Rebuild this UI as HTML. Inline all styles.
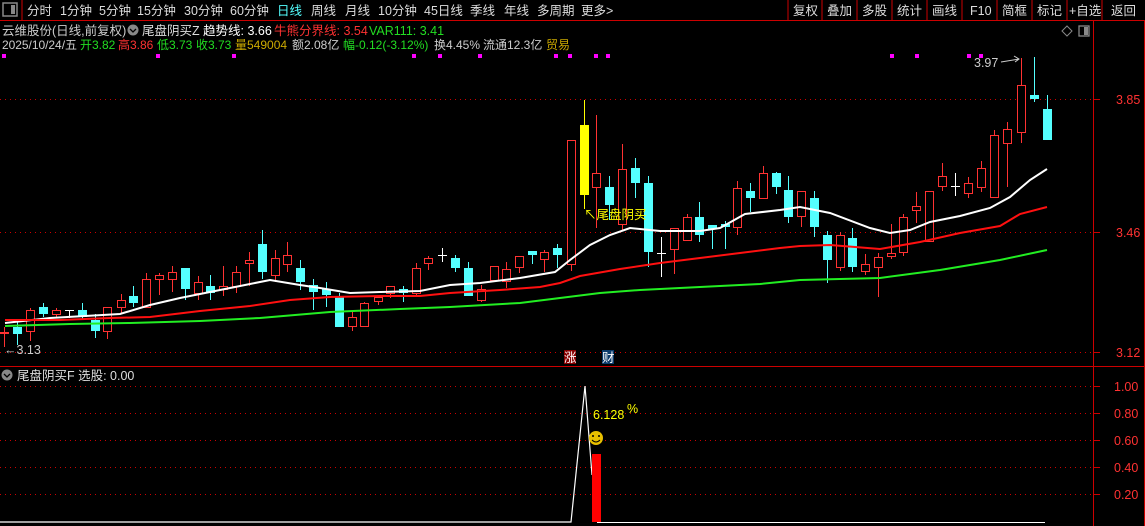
<!DOCTYPE html>
<html><head><meta charset="utf-8"><style>
body{margin:0;width:1145px;height:526px;background:#000;overflow:hidden;font-family:"Liberation Sans","Noto Sans CJK SC",sans-serif;}
svg{position:absolute;left:0;top:0}
text{font-family:"Liberation Sans","Noto Sans CJK SC",sans-serif;font-size:12.5px}
#cand{shape-rendering:crispEdges}
</style></head><body>
<svg id="s" width="1145" height="526" xmlns="http://www.w3.org/2000/svg">
<rect x="3" y="3" width="14" height="13" fill="none" stroke="#888" stroke-width="1.5"/><rect x="11" y="5" width="4" height="9" fill="#888"/>
<line x1="22" y1="0" x2="22" y2="20" stroke="#c00"/>
<g fill="#ddd">
<text x="27" y="15">分时</text><text x="60" y="15">1分钟</text><text x="99" y="15">5分钟</text><text x="137" y="15">15分钟</text><text x="184" y="15">30分钟</text><text x="230" y="15">60分钟</text><text x="277" y="15" fill="#54ffff">日线</text><text x="311" y="15">周线</text><text x="345" y="15">月线</text><text x="378" y="15">10分钟</text><text x="424" y="15">45日线</text><text x="470" y="15">季线</text><text x="504" y="15">年线</text><text x="537" y="15">多周期</text><text x="581" y="15">更多&gt;</text>
<text x="793" y="15">复权</text><text x="827" y="15">叠加</text><text x="862" y="15">多股</text><text x="897" y="15">统计</text><text x="932" y="15">画线</text><text x="970" y="15">F10</text><text x="1002" y="15">简框</text><text x="1037" y="15">标记</text><text x="1069" y="15">+自选</text><text x="1111" y="15">返回</text>
</g>
<g stroke="#c00"><line x1="788" y1="0" x2="788" y2="20"/><line x1="822" y1="0" x2="822" y2="20"/><line x1="857" y1="0" x2="857" y2="20"/><line x1="892" y1="0" x2="892" y2="20"/><line x1="927" y1="0" x2="927" y2="20"/><line x1="962" y1="0" x2="962" y2="20"/><line x1="997" y1="0" x2="997" y2="20"/><line x1="1032" y1="0" x2="1032" y2="20"/><line x1="1067" y1="0" x2="1067" y2="20"/><line x1="1102" y1="0" x2="1102" y2="20"/></g>
<line x1="0" y1="20.5" x2="1145" y2="20.5" stroke="#c00"/>
<line x1="1093.5" y1="20" x2="1093.5" y2="526" stroke="#c00"/>
<line x1="1144.5" y1="20" x2="1144.5" y2="526" stroke="#c00"/>
<line x1="0" y1="366.5" x2="1145" y2="366.5" stroke="#c00"/>
<text x="2" y="35" fill="#ccc">云维股份(日线,前复权)</text>
<circle cx="133" cy="30" r="5.5" fill="#888"/><path d="M130 29l3 3 3-3" stroke="#000" fill="none" stroke-width="1.3"/>
<text x="142" y="35" fill="#ddd">尾盘阴买Z</text>
<text x="203" y="35" fill="#fff">趋势线: 3.66</text>
<text x="274" y="35" fill="#ff3232">牛熊分界线: 3.54</text>
<text x="369" y="35" fill="#22dd22">VAR111: 3.41</text>
<g style="font-size:12px">
<text x="2" y="49" fill="#ccc" style="font-size:12px" textLength="75">2025/10/24/五</text>
<text x="80" y="49" fill="#22dd22" style="font-size:12px">开3.82</text>
<text x="118" y="49" fill="#ff3232" style="font-size:12px">高3.86</text>
<text x="157" y="49" fill="#22dd22" style="font-size:12px">低3.73</text>
<text x="196" y="49" fill="#22dd22" style="font-size:12px">收3.73</text>
<text x="235" y="49" fill="#ccaa00" style="font-size:12px">量549004</text>
<text x="292" y="49" fill="#ccc" style="font-size:12px">额2.08亿</text>
<text x="343" y="49" fill="#22dd22" style="font-size:12px">幅-0.12(-3.12%)</text>
<text x="434" y="49" fill="#ccc" style="font-size:12px">换4.45%</text>
<text x="483" y="49" fill="#ccc" style="font-size:12px">流通12.3亿</text>
<text x="546" y="49" fill="#ccaa00" style="font-size:12px">贸易</text>
</g>
<path d="M1062 31l5-5 5 5-5 5z" fill="none" stroke="#888"/>
<rect x="1079" y="26" width="10" height="10" fill="none" stroke="#888" stroke-width="1.3"/><rect x="1084" y="27" width="4" height="8" fill="#888"/>
<g stroke="#c00" stroke-dasharray="1,4">
<line x1="0" y1="99.5" x2="1093" y2="99.5"/><line x1="0" y1="232.5" x2="1093" y2="232.5"/><line x1="0" y1="352.5" x2="1093" y2="352.5"/>
<line x1="0" y1="386.5" x2="1093" y2="386.5"/><line x1="0" y1="413.5" x2="1093" y2="413.5"/><line x1="0" y1="440.5" x2="1093" y2="440.5"/><line x1="0" y1="467.5" x2="1093" y2="467.5"/><line x1="0" y1="494.5" x2="1093" y2="494.5"/>
</g>
<g fill="#ff3232">
<text x="1116" y="104">3.85</text><text x="1116" y="237">3.46</text><text x="1116" y="357">3.12</text>
<text x="1114" y="391">1.00</text><text x="1114" y="418">0.80</text><text x="1114" y="445">0.60</text><text x="1114" y="472">0.40</text><text x="1114" y="499">0.20</text>
</g>
<g stroke="#c00"><line x1="1093" y1="99.5" x2="1100" y2="99.5"/><line x1="1093" y1="232.5" x2="1100" y2="232.5"/><line x1="1093" y1="352.5" x2="1100" y2="352.5"/><line x1="1093" y1="386.5" x2="1100" y2="386.5"/><line x1="1093" y1="413.5" x2="1100" y2="413.5"/><line x1="1093" y1="440.5" x2="1100" y2="440.5"/><line x1="1093" y1="467.5" x2="1100" y2="467.5"/><line x1="1093" y1="494.5" x2="1100" y2="494.5"/></g>
<g id="cand"></g>
<polyline fill="none" stroke="#fff" stroke-width="2" points="5,323 50,318 120,314 150,305 180,298 210,292 245,285 270,280 300,285 320,288 350,293 380,292 420,291 450,285 480,283 520,278 555,272 570,260 590,245 610,235 630,228 660,231 700,231 720,228 745,214 780,210 800,207 830,213 870,228 890,233 910,230 930,222 960,216 990,208 1010,197 1030,180 1047,169"/>
<polyline fill="none" stroke="#ff1010" stroke-width="2" points="5,320 60,320 110,318 150,317 200,311 250,306 290,300 330,297 380,296 420,296 450,293 500,290 540,287 560,283 580,276 620,269 660,263 700,258 740,253 780,248 800,246 830,245 880,249 920,242 960,233 1000,226 1020,214 1047,207"/>
<polyline fill="none" stroke="#22ee22" stroke-width="2" points="5,326 70,324 130,323 200,321 260,318 330,312 400,309 450,307 520,303 560,298 600,293 640,290 700,287 760,284 800,280 880,278 940,270 1000,260 1047,250"/>
<g fill="#ff00ff"><rect x="2" y="54" width="4" height="4"/><rect x="156" y="54" width="4" height="4"/><rect x="232" y="54" width="4" height="4"/><rect x="412" y="54" width="4" height="4"/><rect x="438" y="54" width="4" height="4"/><rect x="478" y="54" width="4" height="4"/><rect x="554" y="54" width="4" height="4"/><rect x="568" y="54" width="4" height="4"/><rect x="594" y="54" width="4" height="4"/><rect x="606" y="54" width="4" height="4"/><rect x="890" y="54" width="4" height="4"/><rect x="915" y="54" width="4" height="4"/><rect x="967" y="54" width="4" height="4"/><rect x="979" y="54" width="4" height="4"/></g>
<text x="974" y="67" fill="#ccc">3.97</text><path d="M1001 62l18-3M1014 56l5 3-4 3" stroke="#ccc" fill="none"/>
<text x="4" y="354" fill="#ccc">←3.13</text>
<text x="584" y="219" fill="#ffff00">↖尾盘阴买</text>
<rect x="564" y="350" width="12" height="14" fill="#800"/><text x="564" y="362" fill="#fff" font-size="11">涨</text>
<rect x="602" y="350" width="12" height="14" fill="#0a3a6a"/><text x="602" y="362" fill="#fff" font-size="11">财</text>
<circle cx="7" cy="375" r="5.5" fill="#888"/><path d="M4 374l3 3 3-3" stroke="#000" fill="none" stroke-width="1.3"/>
<text x="17" y="380" fill="#ddd">尾盘阴买F  选股: 0.00</text>
<polyline fill="none" stroke="#fff" stroke-width="1.2" points="0,522 571,522 585,386 592,475"/>
<line x1="597" y1="522.5" x2="1045" y2="522.5" stroke="#fff"/>
<rect x="592" y="454" width="9" height="68" fill="#ff0000"/>
<circle cx="596" cy="438" r="7" fill="#e8c000"/><circle cx="593" cy="436" r="1" fill="#000"/><circle cx="599" cy="436" r="1" fill="#000"/><path d="M592 440q4 4 8 0" stroke="#000" fill="none"/>
<text x="593" y="419" fill="#ffff00">6.128</text><text x="627" y="413" fill="#ffff00" font-size="11">%</text>
</svg>
<script>
var C=[[4,'r',332,334,327,347],[17,'c',327,334,320,345],[30,'r',310,332,308,341],[43,'c',307,314,303,317],[56,'r',310,315,308,318],[69,'w',310,310,310,318],[82,'c',310,317,303,320],[95,'c',320,331,314,338],[107,'r',307,332,307,339],[121,'r',300,308,294,314],[133,'c',296,303,286,307],[146,'r',279,308,273,308],[159,'r',275,280,273,295],[172,'r',272,280,266,292],[185,'c',268,289,268,300],[198,'r',282,294,276,300],[210,'c',286,293,275,300],[223,'r',286,290,266,296],[236,'r',272,287,266,293],[249,'r',260,264,252,286],[262,'c',244,272,230,279],[275,'r',258,276,250,282],[287,'r',255,265,242,272],[300,'c',268,282,260,290],[313,'c',285,292,279,310],[326,'c',289,295,282,307],[339,'c',296,327,293,327],[352,'r',317,327,311,331],[364,'r',303,327,302,327],[378,'r',297,302,296,305],[390,'r',286,294,286,298],[403,'c',289,293,286,302],[416,'r',268,294,263,295],[428,'r',258,264,256,270],[442,'w',255,255,248,262],[455,'c',258,268,255,272],[468,'c',268,296,262,296],[481,'r',289,301,285,302],[494,'r',266,281,266,282],[506,'r',269,282,262,288],[519,'r',256,268,256,273],[532,'c',251,255,251,264],[544,'r',252,260,250,272],[557,'c',248,255,244,268],[571,'r',140,265,140,271],[584,'y',125,195,100,209],[596,'r',173,188,115,228],[609,'c',187,205,176,220],[622,'r',169,225,144,230],[635,'c',168,183,158,198],[648,'c',183,252,176,267],[661,'w',253,253,237,277],[674,'r',228,250,228,274],[687,'r',217,241,214,241],[699,'c',217,235,202,242],[712,'c',225,229,225,249],[725,'c',224,227,221,249],[737,'r',188,228,181,235],[750,'c',191,198,183,212],[763,'r',173,199,166,199],[776,'c',173,187,172,194],[788,'c',190,217,176,223],[801,'r',191,217,191,227],[814,'c',198,227,191,237],[827,'c',235,260,231,283],[840,'r',235,268,232,271],[852,'c',238,267,228,272],[865,'r',264,272,254,275],[878,'r',257,268,253,297],[891,'r',253,257,224,259],[903,'r',217,253,214,256],[916,'r',206,211,192,223],[929,'r',191,242,191,242],[942,'r',176,187,163,191],[955,'w',186,186,173,196],[968,'r',183,194,177,198],[981,'r',168,188,161,192],[994,'r',135,198,130,198],[1007,'r',129,144,122,187],[1021,'r',85,133,58,143],[1034,'c',95,99,57,102],[1047,'c',109,140,95,140]];
var g=document.getElementById('cand'),s='';
C.forEach(function(c){var x=c[0],t=c[1],col=t=='r'?'#ff3232':t=='c'?'#54ffff':t=='y'?'#ffff00':'#fff';
if(t=='r'){s+='<rect x="'+x+'" y="'+c[4]+'" width="1" height="'+(c[2]-c[4])+'" fill="'+col+'"/><rect x="'+x+'" y="'+c[3]+'" width="1" height="'+(c[5]-c[3])+'" fill="'+col+'"/>';
s+='<rect x="'+(x-4)+'" y="'+c[2]+'" width="9" height="'+Math.max(1,c[3]-c[2])+'" fill="'+col+'"/><rect x="'+(x-3)+'" y="'+(c[2]+1)+'" width="7" height="'+Math.max(0,c[3]-c[2]-2)+'" fill="#000"/>';}
else{s+='<rect x="'+x+'" y="'+c[4]+'" width="1" height="'+(c[5]-c[4])+'" fill="'+col+'"/>';
if(t=='w'){s+='<rect x="'+(x-4)+'" y="'+c[2]+'" width="9" height="1" fill="#fff"/>';}
else{s+='<rect x="'+(x-4)+'" y="'+c[2]+'" width="9" height="'+Math.max(2,c[3]-c[2])+'" fill="'+col+'"/>';}}});
g.innerHTML=s;
</script>
</body></html>
